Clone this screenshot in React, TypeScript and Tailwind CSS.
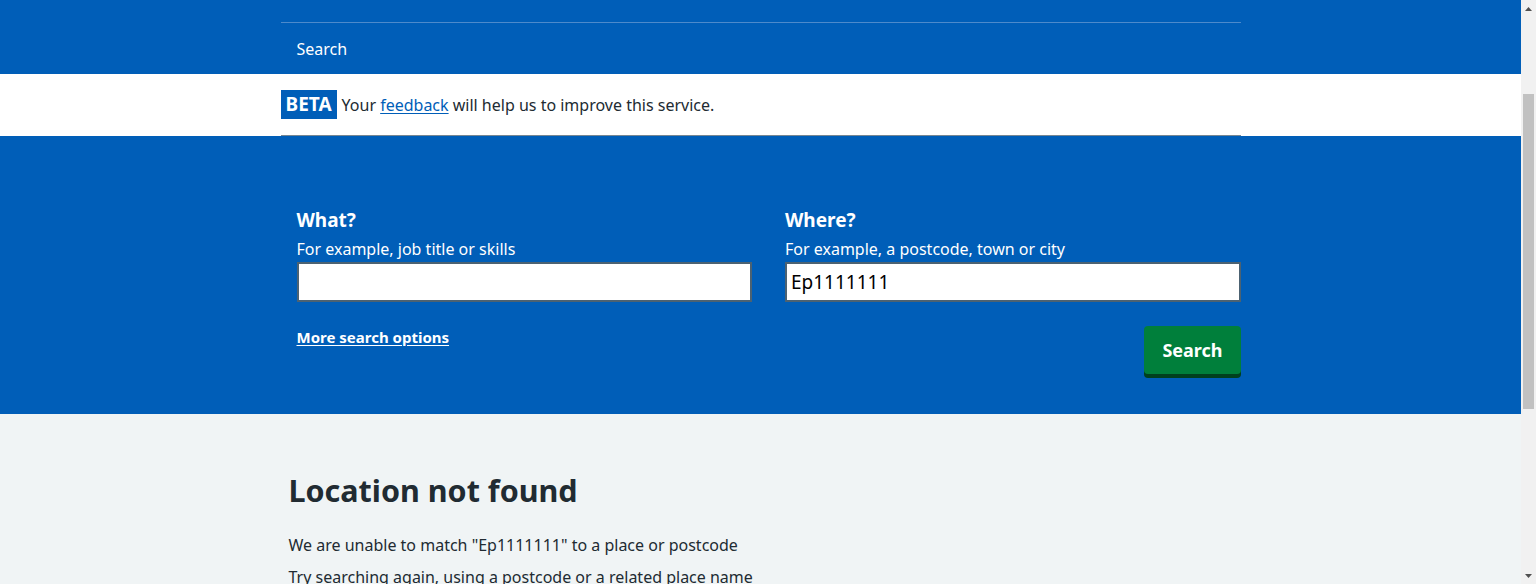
import { useLayoutEffect, useRef } from 'react';

const font = { fontFamily: '"Noto Sans", "Open Sans", Arial, sans-serif' };

// header area above the fold; the page is shown scrolled past it
function Header() {
  return <div className="bg-[#005eb8] h-[143px]" />;
}

function TopNav() {
  return (
    <div className="bg-[#005eb8]">
      <div className="mx-auto w-[960px] pt-[22px]">
        <div className="border-t border-[#4d8acb] h-[52px] flex items-center px-4">
          <a className="text-white text-[16px]">Search</a>
        </div>
      </div>
    </div>
  );
}

function BetaBanner() {
  return (
    <div className="bg-white">
      <div className="mx-auto w-[960px] h-[62px] border-b border-[#768692] flex items-center">
        <span className="bg-[#005eb8] text-white font-bold text-[19px] leading-[29px] px-[5px] mr-[5px]">BETA</span>
        <span className="text-[#212b32] text-[16px]">
          Your <a className="text-[#005eb8] underline underline-offset-2">feedback</a> will help us to improve this service.
        </span>
      </div>
    </div>
  );
}

function Field({ label, hint, value }: { label: string; hint: string; value?: string }) {
  return (
    <div className="flex-1 flex flex-col">
      <label className="text-white font-bold text-[19px] leading-[28px]">{label}</label>
      <span className="text-white text-[16px] leading-[24px] mt-[3px] mb-[1px]">{hint}</span>
      <input
        defaultValue={value}
        className="h-[40px] border-2 border-[#4c6272] bg-white px-[4px] text-[19px] text-black outline-none"
        style={font}
      />
    </div>
  );
}

function SearchPanel() {
  return (
    <div className="bg-[#005eb8]">
      <div className="mx-auto w-[960px] pl-4 pt-[70px] h-[278px]">
        <div className="flex gap-[33px]">
          <Field label="What?" hint="For example, job title or skills" />
          <Field label="Where?" hint="For example, a postcode, town or city" value="Ep1111111" />
        </div>
        <div className="flex justify-between items-start mt-[24px]">
          <a className="text-white font-bold text-[15px] leading-[22px] underline underline-offset-2">More search options</a>
          <button className="bg-[#007f3b] text-white font-bold text-[18px] h-[48px] px-[18px] rounded-[4px] shadow-[0_4px_0_#00401e]">
            Search
          </button>
        </div>
      </div>
    </div>
  );
}

function Results() {
  return (
    <div className="bg-[#f0f4f5] min-h-[463px]">
      <div className="mx-auto w-[960px] px-2 pt-[56px] text-[#212b32]">
        <h1 className="font-bold text-[30.5px] leading-[40px] mb-[23px]">Location not found</h1>
        <p className="text-[16px] leading-[24px] mb-[8px]">We are unable to match "Ep1111111" to a place or postcode</p>
        <p className="text-[16px] leading-[24px] mb-[8px]">Try searching again, using a postcode or a related place name</p>
      </div>
    </div>
  );
}

function ScrollBar() {
  return (
    <div className="w-[15px] h-screen bg-[#f1f1f1] flex flex-col shrink-0">
      <div className="h-[17px] flex items-center justify-center">
        <svg width="7" height="4" viewBox="0 0 7 4"><path d="M0 4 L3.5 0 L7 4 Z" fill="#505050" /></svg>
      </div>
      <div className="flex-1 flex flex-col pt-[77px]">
        <div className="h-[315px] mx-[2px] bg-[#c1c1c1]" />
      </div>
      <div className="h-[17px] flex items-center justify-center">
        <svg width="7" height="4" viewBox="0 0 7 4"><path d="M0 0 L3.5 4 L7 0 Z" fill="#505050" /></svg>
      </div>
    </div>
  );
}

export default function App() {
  const ref = useRef<HTMLDivElement>(null);
  useLayoutEffect(() => {
    if (ref.current) ref.current.scrollTop = 143;
  }, []);
  return (
    <div className="flex h-screen overflow-hidden" style={font}>
      <div ref={ref} className="flex-1 h-screen overflow-y-scroll">
        <Header />
        <TopNav />
        <BetaBanner />
        <SearchPanel />
        <Results />
      </div>
      <ScrollBar />
    </div>
  );
}
